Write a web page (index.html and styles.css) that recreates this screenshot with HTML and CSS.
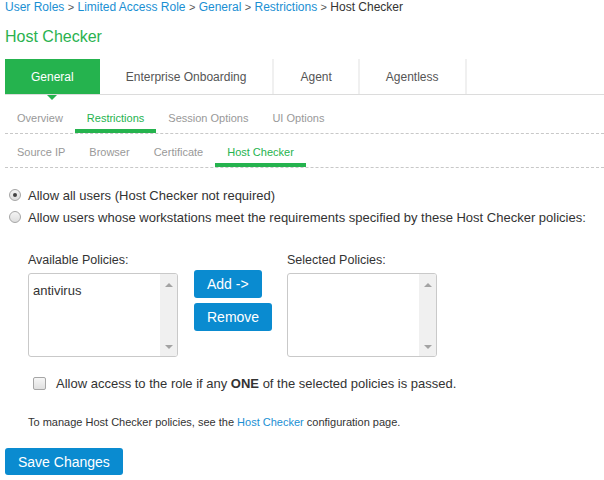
FILE: index.html
```html
<!DOCTYPE html>
<html lang="en">
<head>
    <meta charset="UTF-8">
    <meta name="viewport" content="width=device-width, initial-scale=1.0">
    <title>Host Checker</title>
    <link rel="stylesheet" href="styles.css">
</head>
<body>

<div class="page">
    <div class="breadcrumb">
        <a href="#">User Roles</a> <span class="sep">&gt;</span>
        <a href="#">Limited Access Role</a> <span class="sep">&gt;</span>
        <a href="#">General</a> <span class="sep">&gt;</span>
        <a href="#">Restrictions</a> <span class="sep">&gt;</span>
        <span class="current">Host Checker</span>
    </div>

    <h1 class="title">Host Checker</h1>

    <ul class="tabs">
        <li class="tab active">General</li>
        <li class="tab">Enterprise Onboarding</li>
        <li class="tab">Agent</li>
        <li class="tab">Agentless</li>
    </ul>

    <ul class="subtabs">
        <li>Overview</li>
        <li class="active">Restrictions</li>
        <li>Session Options</li>
        <li>UI Options</li>
    </ul>

    <ul class="subtabs">
        <li>Source IP</li>
        <li>Browser</li>
        <li>Certificate</li>
        <li class="active">Host Checker</li>
    </ul>

    <div class="choices">
        <label class="choice"><span class="radio checked"></span><span>Allow all users (Host Checker not required)</span></label>
        <label class="choice"><span class="radio"></span><span>Allow users whose workstations meet the requirements specified by these Host Checker policies:</span></label>
    </div>

    <div class="policies">
        <div class="policy-col">
            <div class="policy-label">Available Policies:</div>
            <div class="listbox">
                <div class="list-items">
                    <div>antivirus</div>
                </div>
                <div class="scrollbar"><span class="arrow-up"></span><span class="arrow-down"></span></div>
            </div>
        </div>

        <div class="move-buttons">
            <button class="btn">Add -&gt;</button>
            <button class="btn">Remove</button>
        </div>

        <div class="policy-col">
            <div class="policy-label">Selected Policies:</div>
            <div class="listbox">
                <div class="list-items"></div>
                <div class="scrollbar"><span class="arrow-up"></span><span class="arrow-down"></span></div>
            </div>
        </div>
    </div>

    <label class="any-one"><span class="checkbox"></span><span>Allow access to the role if any <b>ONE</b> of the selected policies is passed.</span></label>

    <p class="note">To manage Host Checker policies, see the <a href="#">Host Checker</a> configuration page.</p>

    <button class="btn save">Save Changes</button>
</div>

</body>
</html>
```

FILE: styles.css
```css
body {
    margin: 0;
    font-family: "Liberation Sans", Arial, sans-serif;
    color: #333;
    background-color: #fff;
}

a {
    color: #1a8fd3;
    text-decoration: none;
}

.page {
    padding-left: 5px;
}

/* breadcrumb + title */
.breadcrumb {
    font-size: 12px;
    line-height: 14px;
}

.breadcrumb .sep {
    font-size: 11px;
    color: #555;
}

.breadcrumb .current {
    color: #333;
}

.title {
    margin: 13px 0 0;
    font-size: 16px;
    line-height: 20px;
    font-weight: normal;
    color: #2ab24f;
}

/* main tabs */
.tabs {
    list-style: none;
    margin: 12px 0 0;
    padding: 0;
    display: flex;
    border-bottom: 1px solid #dcdcdc;
}

.tab {
    position: relative;
    height: 35px;
    line-height: 36px;
    padding: 0 26px;
    font-size: 12px;
    color: #555;
    border-right: 2px solid #f0f0f0;
}

.tab.active {
    background-color: #25b34e;
    color: #fff;
    border-right: none;
}

.tab.active::after {
    content: "";
    position: absolute;
    left: 50%;
    bottom: -6px;
    margin-left: -5px;
    border-left: 5px solid transparent;
    border-right: 5px solid transparent;
    border-top: 5px solid #25b34e;
}

/* sub tabs */
.subtabs {
    list-style: none;
    margin: 0;
    padding: 0;
    display: flex;
    border-bottom: 1px dashed #c8c8c8;
}

.subtabs li {
    padding: 16px 12px 4px;
    font-size: 11px;
    line-height: 14px;
    color: #999;
    border-bottom: 4px solid transparent;
}

.subtabs + .subtabs li {
    padding-top: 11px;
}

.subtabs li.active {
    color: #25b34e;
    border-bottom-color: #25b34e;
}

/* radio choices */
.choices {
    margin-top: 16px;
}

.choice {
    display: flex;
    align-items: center;
    height: 22px;
    font-size: 13px;
}

.radio {
    width: 10px;
    height: 10px;
    margin: 0 7px 0 4px;
    border: 1px solid #a6a6a6;
    border-radius: 50%;
    background: linear-gradient(#f4f4f4, #dedede);
    display: flex;
    align-items: center;
    justify-content: center;
}

.radio.checked::after {
    content: "";
    width: 4px;
    height: 4px;
    border-radius: 50%;
    background-color: #444;
}

/* policy lists */
.policies {
    display: flex;
    margin: 24px 0 0 23px;
}

.policy-col {
    width: 150px;
}

.policy-label {
    font-size: 12.5px;
    line-height: 16px;
    margin-bottom: 5px;
}

.listbox {
    display: flex;
    height: 82px;
    border: 1px solid #c9c9c9;
    border-radius: 3px;
    overflow: hidden;
}

.list-items {
    flex: 1;
    padding: 9px 4px;
    font-size: 13px;
    line-height: 16px;
}

.scrollbar {
    width: 17px;
    background-color: #f0f0f0;
    display: flex;
    flex-direction: column;
    justify-content: space-between;
    align-items: center;
    padding: 9px 0 7px;
}

.arrow-up {
    border-left: 4px solid transparent;
    border-right: 4px solid transparent;
    border-bottom: 4px solid #a3a3a3;
}

.arrow-down {
    border-left: 4px solid transparent;
    border-right: 4px solid transparent;
    border-top: 4px solid #a3a3a3;
}

.move-buttons {
    width: 78px;
    margin: 18px 15px 0 16px;
    display: flex;
    flex-direction: column;
    align-items: flex-start;
    gap: 5px;
}

.btn {
    height: 28px;
    padding: 0 13px;
    font-family: "Liberation Sans", Arial, sans-serif;
    font-size: 14px;
    color: #fff;
    background-color: #0a8bd0;
    border: none;
    border-radius: 3px;
    cursor: pointer;
}

.btn:hover {
    background-color: #0876b0;
}

/* checkbox + note */
.any-one {
    display: flex;
    align-items: center;
    height: 18px;
    margin: 17px 0 0 28px;
    font-size: 13px;
}

.checkbox {
    width: 11px;
    height: 11px;
    margin-right: 10px;
    border: 1px solid #a6a6a6;
    border-radius: 2px;
    background: linear-gradient(#f6f6f6, #e0e0e0);
}

.note {
    margin: 23px 0 0 23px;
    font-size: 11px;
    line-height: 14px;
}

.save {
    margin-top: 19px;
    height: 27px;
}
```
